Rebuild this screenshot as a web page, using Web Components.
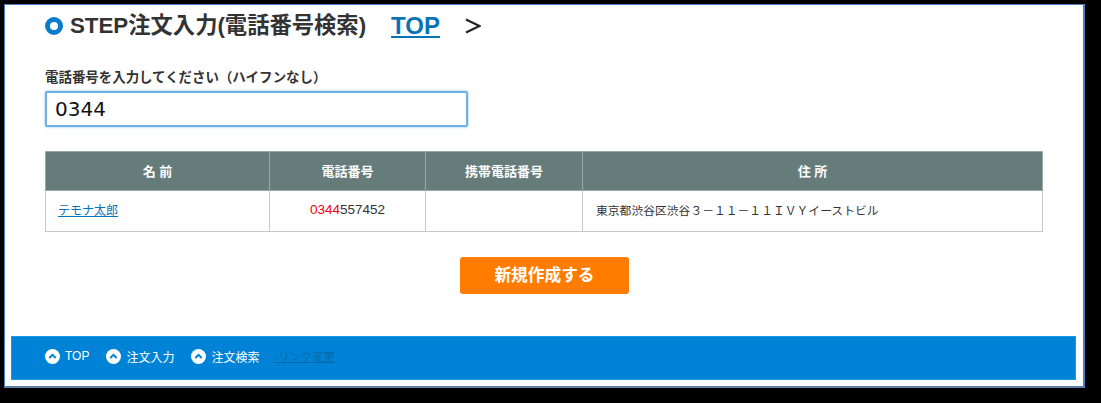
<!DOCTYPE html>
<html lang="ja"><head><meta charset="utf-8"><style>
html,body{margin:0;background:#000}
body{padding:4px 0 0 4px;height:399px;box-sizing:border-box;overflow:hidden;font-family:"Liberation Sans","Noto Sans CJK JP",sans-serif}
</style></head><body>
<order-window>
  <step-title slot="top"></step-title>
  <phone-search></phone-search>
  <result-table></result-table>
  <action-button>新規作成する</action-button>
  <site-footer slot="foot"></site-footer>
</order-window>
<script>
const F='"Liberation Sans","Noto Sans CJK JP",sans-serif';
function def(name,css,html){customElements.define(name,class extends HTMLElement{constructor(){super();this.attachShadow({mode:'open'}).innerHTML='<style>'+css+'</style>'+html;}});}
def('order-window',`:host{display:flex;flex-direction:column;box-sizing:border-box;width:1081px;height:384px;background:#fff;border:1px solid #4a7fc4;border-width:1px 2px 2px 1px;border-bottom-color:#5f7fa8;padding:0 7px 6px 6px;color:#333}
main{flex:1;padding:0 34px;display:flex;flex-direction:column}`,`<slot name="top"></slot><main><slot></slot></main><slot name="foot"></slot>`);
def('step-title',`:host{display:flex;align-items:center;height:41px;padding:0 34px;font:bold 22.3px/30px ${F};color:#333;white-space:nowrap}
i{width:18px;height:18px;box-sizing:border-box;border:5.5px solid #0a7ccb;border-radius:50%;margin-right:7px;flex:none}
a{font-weight:bold;font-size:24px;color:#0a72b8;text-decoration:underline;margin-left:25px}
svg{margin-left:25px}`,`<i></i><span>STEP注文入力(電話番号検索)</span><a href="#">TOP</a><svg width="16" height="16" viewBox="0 0 16 16" fill="none" stroke="#222" stroke-width="2.2"><path d="M1 1.5 14.5 8 1 14.5"/></svg>`);
def('phone-search',`:host{display:block;padding-top:23px}
label{display:block;font:bold 13.45px/18px ${F};color:#333;margin-bottom:4px}
input{display:block;box-sizing:border-box;width:423px;height:36px;border:2px solid #6fb0e2;border-radius:2px;box-shadow:0 0 3px #8fc4ec;padding:0 8px;font:20px "DejaVu Sans",sans-serif;color:#111;outline:none;background:#fff}`,`<label>電話番号を入力してください（ハイフンなし）</label><input value="0344">`);
def('result-table',`:host{display:block;margin-top:24px}
table{border-collapse:collapse;table-layout:fixed;width:997px;font:13.5px ${F}}
th{height:39px;background:#667c7a;color:#fff;border:1px solid #9aa8a7;font-size:13px;font-weight:bold;padding:0 0 2px;box-sizing:border-box}
td{height:41px;border:1px solid #c8c8c8;padding:0 12px 4px;color:#333;box-sizing:border-box}
td.c{text-align:center}
a{color:#0a72b8;font-size:12px}
em{font-style:normal;color:#f00012}
td.addr{font-size:11.8px;padding-left:13px}`,`<table><colgroup><col style="width:224px"><col style="width:156px"><col style="width:157px"><col style="width:460px"></colgroup>
<tr><th>名 前</th><th>電話番号</th><th>携帯電話番号</th><th>住 所</th></tr>
<tr><td><a href="#">テモナ太郎</a></td><td class="c"><em>0344</em>557452</td><td></td><td class="addr">東京都渋谷区渋谷３－１１－１１ＩＶＹイーストビル</td></tr></table>`);
def('action-button',`:host{display:block;align-self:center;margin:25px 0 0 2px}
button{display:block;width:169px;height:37px;border:0;border-radius:3px;background:#ff7c00;color:#fff;font:bold 16.7px ${F};padding:0 0 3px}`,`<button><slot></slot></button>`);
def('site-footer',`:host{display:flex;align-items:center;height:44px;background:#0083d6;border:1px solid #1a9ae6;box-sizing:border-box;padding:0 33px 4px;color:#fff;font:12px ${F};white-space:nowrap}
a{display:flex;align-items:center;color:#fff;text-decoration:none;margin-right:17px}
svg{margin-right:5px}
a.l{color:#0a6aa8;text-decoration:underline;font-size:11.3px;margin-left:-2px}`,
['TOP','注文入力','注文検索'].map(t=>`<a href="#"><svg width="15" height="15" viewBox="0 0 15 15"><circle cx="7.5" cy="7.5" r="7.5" fill="#fff"/><path d="M4.3 9 7.5 5.9 10.7 9" fill="none" stroke="#0083d6" stroke-width="2"/></svg>${t}</a>`).join('')+`<a class="l" href="#">-リンク変更</a>`);
</script></body></html>
